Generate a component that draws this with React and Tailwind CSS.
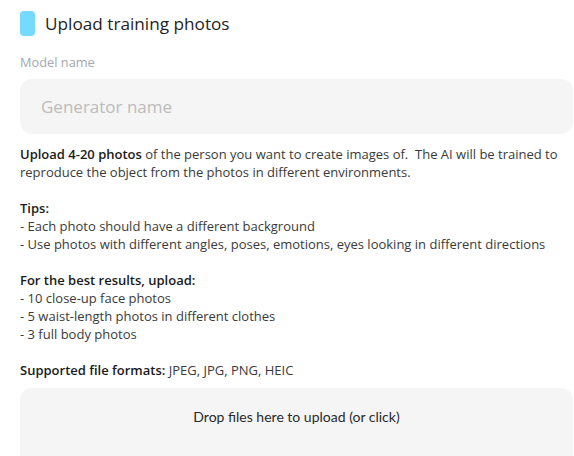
import React from 'react';

const Line = ({ children }) => <p>{children}</p>;

export default function App() {
  return (
    <div className="h-screen bg-white pl-5 pr-[1px] pt-[11px] font-['Open_Sans',sans-serif] text-[#3a3a3a] overflow-hidden">
      {/* Header */}
      <div className="flex items-center gap-[10px] h-[25px]">
        <div className="w-[15px] h-[25px] rounded-[4px] bg-[#74daff]" />
        <h1 className="text-[17.2px] font-medium text-[#1e1e24] leading-none">Upload training photos</h1>
      </div>

      {/* Model name */}
      <label className="block mt-[18px] text-[12.8px] leading-4 text-[#a3a6b0]">Model name</label>
      <input
        type="text"
        placeholder="Generator name"
        className="mt-[9px] block w-full h-[55px] rounded-xl bg-[#f5f5f5] px-[21px] text-[17px] text-[#333] placeholder:text-[#bcbcbc] outline-none"
      />

      {/* Instructions */}
      <div className="mt-[11px] text-[13px] leading-[18px] pr-[10px]">
        <p className="mb-[18px]">
          <span className="font-semibold text-[#1a1a1a]">Upload 4-20 photos</span> of the person you want to create images of.{'\u00a0'} The AI will be trained to reproduce the object from the photos in different environments.
        </p>
        <div className="mb-[18px]">
          <p className="font-semibold text-[#1a1a1a]">Tips:</p>
          <Line>- Each photo should have a different background</Line>
          <Line>- Use photos with different angles, poses, emotions, eyes looking in different directions</Line>
        </div>
        <div className="mb-[18px]">
          <p className="font-semibold text-[#1a1a1a]">For the best results, upload:</p>
          <Line>- 10 close-up face photos</Line>
          <Line>- 5 waist-length photos in different clothes</Line>
          <Line>- 3 full body photos</Line>
        </div>
        <p>
          <span className="font-semibold text-[#1a1a1a]">Supported file formats:</span> JPEG, JPG, PNG, HEIC
        </p>
      </div>

      {/* Drop zone */}
      <div className="mt-[9px] h-[120px] rounded-xl bg-[#f5f5f5] pt-[16px] text-center cursor-pointer">
        <span className="font-['Lato',sans-serif] text-[14px] leading-5 text-[#2a2a2a]">Drop files here to upload (or click)</span>
      </div>
    </div>
  );
}
